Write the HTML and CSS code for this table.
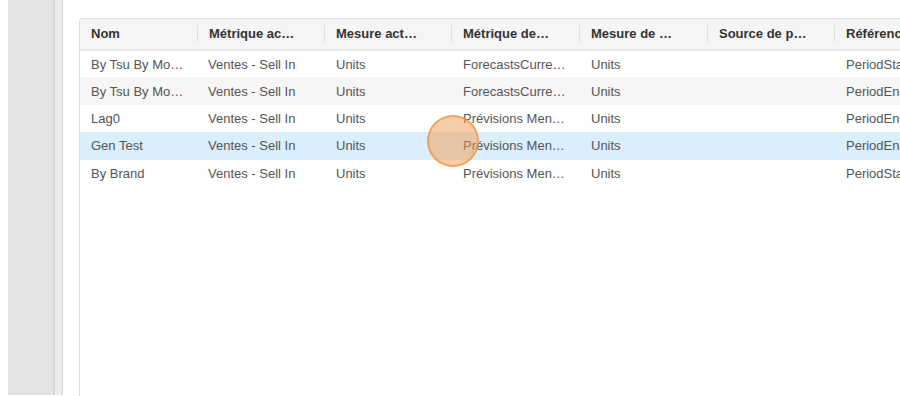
FILE: index.html
```html
<!DOCTYPE html>
<html lang="fr">

<head>
    <meta charset="UTF-8" />
    <meta name="viewport" content="width=device-width, initial-scale=1.0" />
    <link rel="stylesheet" href="styles.css">
    <title>Métriques</title>
</head>

<body>

    <div class="layout">
        <div class="gutter"></div>
        <div class="sidebar"></div>
        <div class="strip"></div>

        <div class="main">
            <div class="grid">
                <table>
                    <colgroup>
                        <col class="c-117">
                        <col class="c-127">
                        <col class="c-127">
                        <col class="c-128">
                        <col class="c-128">
                        <col class="c-127">
                        <col class="c-128">
                    </colgroup>
                    <thead>
                        <tr>
                            <th><span>Nom</span></th>
                            <th><span>Métrique ac…</span></th>
                            <th><span>Mesure act…</span></th>
                            <th><span>Métrique de…</span></th>
                            <th><span>Mesure de …</span></th>
                            <th><span>Source de p…</span></th>
                            <th><span>Référence</span></th>
                        </tr>
                    </thead>
                    <tbody>
                        <tr>
                            <td>By Tsu By Mo…</td>
                            <td>Ventes - Sell In</td>
                            <td>Units</td>
                            <td>ForecastsCurre…</td>
                            <td>Units</td>
                            <td></td>
                            <td>PeriodStart</td>
                        </tr>
                        <tr>
                            <td>By Tsu By Mo…</td>
                            <td>Ventes - Sell In</td>
                            <td>Units</td>
                            <td>ForecastsCurre…</td>
                            <td>Units</td>
                            <td></td>
                            <td>PeriodEnd</td>
                        </tr>
                        <tr>
                            <td>Lag0</td>
                            <td>Ventes - Sell In</td>
                            <td>Units</td>
                            <td>Prévisions Men…</td>
                            <td>Units</td>
                            <td></td>
                            <td>PeriodEnd</td>
                        </tr>
                        <tr class="selected">
                            <td>Gen Test</td>
                            <td>Ventes - Sell In</td>
                            <td>Units</td>
                            <td class="has-cursor">Prévisions Men…<span class="click-dot"></span></td>
                            <td>Units</td>
                            <td></td>
                            <td>PeriodEnd</td>
                        </tr>
                        <tr>
                            <td>By Brand</td>
                            <td>Ventes - Sell In</td>
                            <td>Units</td>
                            <td>Prévisions Men…</td>
                            <td>Units</td>
                            <td></td>
                            <td>PeriodStart</td>
                        </tr>
                    </tbody>
                </table>
            </div>
        </div>
    </div>

</body>

</html>
```

FILE: styles.css
```css
* {
    box-sizing: border-box;
}

body {
    margin: 0;
    background-color: #fff;
    font-family: 'Liberation Sans', Arial, sans-serif;
    font-size: 13px;
    overflow: hidden;
}

.layout {
    display: flex;
    height: 396px;
}

.gutter {
    width: 8px;
    flex-shrink: 0;
}

/* collapsed side panel */
.sidebar {
    width: 47px;
    flex-shrink: 0;
    height: 395px;
    background-color: #e3e3e5;
    border-right: 2px solid #d7d7d9;
}

.strip {
    width: 8px;
    flex-shrink: 0;
    height: 395px;
    background-color: #ececee;
    border-right: 1px solid #d9d9db;
}

.main {
    flex: 1;
    padding: 18px 0 0 16px;
    min-width: 0;
}

.grid {
    width: 900px;
    height: 100%;
    border: 1px solid #dedede;
    border-right: 0;
    border-bottom: 0;
    border-top-left-radius: 4px;
    overflow: hidden;
}

table {
    border-collapse: collapse;
    table-layout: fixed;
    width: 882px;
}

.c-117 {
    width: 117px;
}

.c-127 {
    width: 127px;
}

.c-128 {
    width: 128px;
}

th {
    height: 31px;
    background-color: #f5f5f5;
    border-bottom: 2px solid #e6e6e6;
    color: #333;
    font-weight: bold;
    text-align: left;
    padding: 0 0 2px;
}

th span {
    display: block;
    border-left: 1px solid #e0e0e0;
    padding: 0 11px;
    line-height: 17px;
    white-space: nowrap;
    overflow: hidden;
}

th:first-child span {
    border-left: 0;
}

td {
    height: 27.4px;
    padding: 0 11px;
    color: #555;
    white-space: nowrap;
    overflow: hidden;
}

td:nth-child(n+3) {
    padding-left: 12px;
}

tbody tr:nth-child(even) td {
    background-color: #f6f6f6;
}

tbody tr.selected td {
    background-color: #dbeefc;
}

.has-cursor {
    position: relative;
    overflow: visible;
}

/* click indicator over the selected row */
.click-dot {
    position: absolute;
    left: -24px;
    top: -17px;
    width: 52px;
    height: 52px;
    border-radius: 50%;
    background-color: rgba(240, 155, 80, 0.5);
    border: 2px solid rgba(240, 150, 70, 0.75);
}
```
